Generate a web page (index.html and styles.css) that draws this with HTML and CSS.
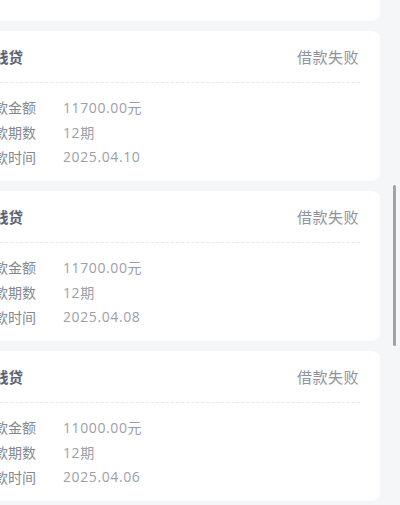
FILE: index.html
```html
<!DOCTYPE html>
<html lang="zh-CN">
<head>
<meta charset="utf-8">
<link rel="stylesheet" href="styles.css">
</head>
<body>
<div class="list">
  <div class="card">
    <div class="head"><span class="title">分期钱贷</span><span class="status">借款失败</span></div>
    <div class="body">
      <div class="row"><span class="label">借款金额</span><span class="value">11700.00元</span></div>
      <div class="row"><span class="label">借款期数</span><span class="value">12期</span></div>
    </div>
  </div>
  <div class="card">
    <div class="head"><span class="title">分期钱贷</span><span class="status">借款失败</span></div>
    <div class="body">
      <div class="row"><span class="label">借款金额</span><span class="value">11700.00元</span></div>
      <div class="row"><span class="label">借款期数</span><span class="value">12期</span></div>
      <div class="row"><span class="label">借款时间</span><span class="value">2025.04.10</span></div>
    </div>
  </div>
  <div class="card">
    <div class="head"><span class="title">分期钱贷</span><span class="status">借款失败</span></div>
    <div class="body">
      <div class="row"><span class="label">借款金额</span><span class="value">11700.00元</span></div>
      <div class="row"><span class="label">借款期数</span><span class="value">12期</span></div>
      <div class="row"><span class="label">借款时间</span><span class="value">2025.04.08</span></div>
    </div>
  </div>
  <div class="card">
    <div class="head"><span class="title">分期钱贷</span><span class="status">借款失败</span></div>
    <div class="body">
      <div class="row"><span class="label">借款金额</span><span class="value">11000.00元</span></div>
      <div class="row"><span class="label">借款期数</span><span class="value">12期</span></div>
      <div class="row"><span class="label">借款时间</span><span class="value">2025.04.06</span></div>
    </div>
  </div>
</div>
<div class="scrollbar"></div>
</body>
</html>
```
FILE: styles.css
```css
html, body {
  margin: 0;
  padding: 0;
  height: 100%;
  overflow: hidden;
  background: #f5f6f8;
  font-family: "Noto Sans CJK SC", "Noto Sans", sans-serif;
}
.list {
  display: flex;
  flex-direction: column;
  gap: 10px;
  margin: -129px 20px 0 -40px;
}
.card {
  background: #ffffff;
  border-radius: 8px;
  padding: 0 20px;
  height: 150px;
  box-sizing: border-box;
}
.head {
  height: 51px;
  display: flex;
  align-items: center;
  justify-content: space-between;
  border-bottom: 1px dashed #e5e7eb;
}
.title {
  font-size: 14.5px;
  font-weight: 600;
  color: #5b6470;
  margin-left: -15px;
}
.status {
  font-size: 15px;
  letter-spacing: 0.5px;
  margin-right: 1px;
  color: #8f949b;
}
.body {
  padding-top: 11px;
}
.row {
  height: 25px;
  display: flex;
  align-items: center;
}
.label {
  width: 83px;
  font-size: 14px;
  color: #83898f;
}
.value {
  font-family: "Open Sans", "Noto Sans CJK SC", sans-serif;
  font-size: 14px;
  letter-spacing: 0.6px;
  color: #9ba0a7;
}
.scrollbar {
  position: absolute;
  left: 393px;
  top: 185px;
  width: 3px;
  height: 161px;
  border-radius: 2px;
  background: #a3a3a3;
}
```
